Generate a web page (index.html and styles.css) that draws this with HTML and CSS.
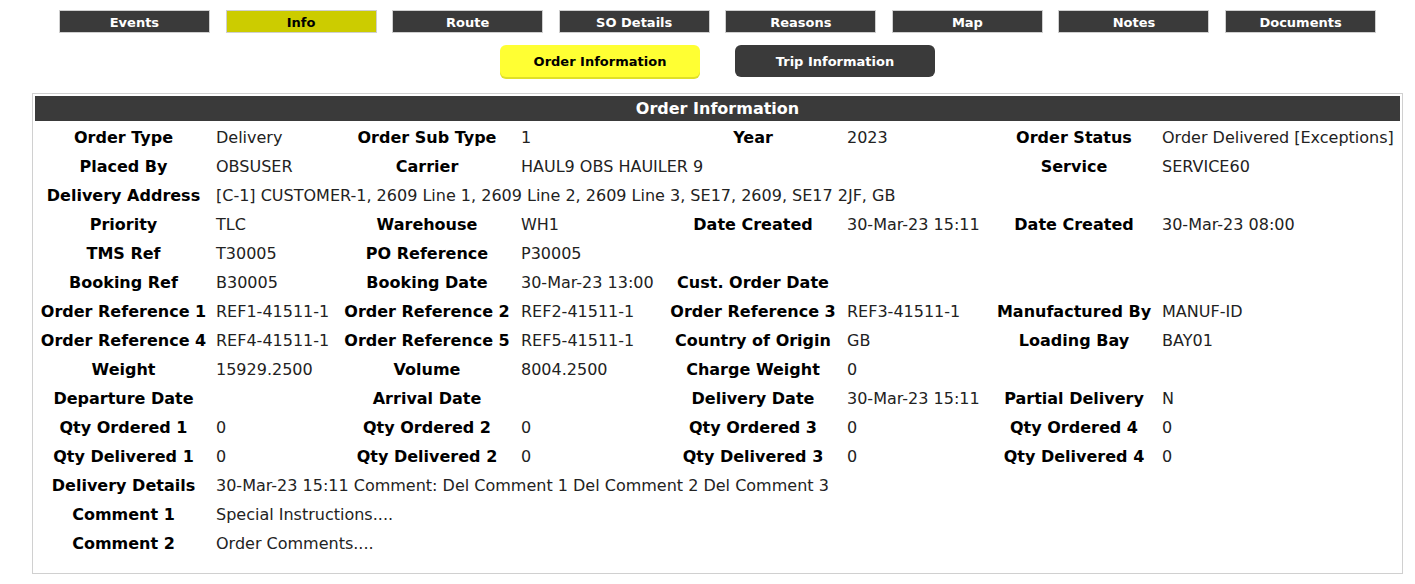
FILE: index.html
```html
<!DOCTYPE html>
<html>
<head>
    <meta charset="utf-8">
    <link rel="stylesheet" href="styles.css">
</head>
<body>
    <div class="page">
        <div class="tabs">
            <div class="tab">Events</div>
            <div class="tab active">Info</div>
            <div class="tab">Route</div>
            <div class="tab">SO Details</div>
            <div class="tab">Reasons</div>
            <div class="tab">Map</div>
            <div class="tab">Notes</div>
            <div class="tab">Documents</div>
        </div>

        <div class="sub-tabs">
            <div class="sub-tab selected">Order Information</div>
            <div class="sub-tab">Trip Information</div>
        </div>

        <div class="panel">
            <div class="panel-header">Order Information</div>
            <div class="info-grid">
                <div class="lbl">Order Type</div><div class="val">Delivery</div>
                <div class="lbl">Order Sub Type</div><div class="val">1</div>
                <div class="lbl">Year</div><div class="val">2023</div>
                <div class="lbl">Order Status</div><div class="val">Order Delivered [Exceptions]</div>

                <div class="lbl">Placed By</div><div class="val">OBSUSER</div>
                <div class="lbl">Carrier</div><div class="val span3">HAUL9 OBS HAUILER 9</div>
                <div class="lbl">Service</div><div class="val">SERVICE60</div>

                <div class="lbl">Delivery Address</div><div class="val span7">[C-1] CUSTOMER-1, 2609 Line 1, 2609 Line 2, 2609 Line 3, SE17, 2609, SE17 2JF, GB</div>

                <div class="lbl">Priority</div><div class="val">TLC</div>
                <div class="lbl">Warehouse</div><div class="val">WH1</div>
                <div class="lbl">Date Created</div><div class="val">30-Mar-23 15:11</div>
                <div class="lbl">Date Created</div><div class="val">30-Mar-23 08:00</div>

                <div class="lbl">TMS Ref</div><div class="val">T30005</div>
                <div class="lbl">PO Reference</div><div class="val">P30005</div>
                <div class="lbl"></div><div class="val"></div>
                <div class="lbl"></div><div class="val"></div>

                <div class="lbl">Booking Ref</div><div class="val">B30005</div>
                <div class="lbl">Booking Date</div><div class="val">30-Mar-23 13:00</div>
                <div class="lbl">Cust. Order Date</div><div class="val"></div>
                <div class="lbl"></div><div class="val"></div>

                <div class="lbl">Order Reference 1</div><div class="val">REF1-41511-1</div>
                <div class="lbl">Order Reference 2</div><div class="val">REF2-41511-1</div>
                <div class="lbl">Order Reference 3</div><div class="val">REF3-41511-1</div>
                <div class="lbl">Manufactured By</div><div class="val">MANUF-ID</div>

                <div class="lbl">Order Reference 4</div><div class="val">REF4-41511-1</div>
                <div class="lbl">Order Reference 5</div><div class="val">REF5-41511-1</div>
                <div class="lbl">Country of Origin</div><div class="val">GB</div>
                <div class="lbl">Loading Bay</div><div class="val">BAY01</div>

                <div class="lbl">Weight</div><div class="val">15929.2500</div>
                <div class="lbl">Volume</div><div class="val">8004.2500</div>
                <div class="lbl">Charge Weight</div><div class="val">0</div>
                <div class="lbl"></div><div class="val"></div>

                <div class="lbl">Departure Date</div><div class="val"></div>
                <div class="lbl">Arrival Date</div><div class="val"></div>
                <div class="lbl">Delivery Date</div><div class="val">30-Mar-23 15:11</div>
                <div class="lbl">Partial Delivery</div><div class="val">N</div>

                <div class="lbl">Qty Ordered 1</div><div class="val">0</div>
                <div class="lbl">Qty Ordered 2</div><div class="val">0</div>
                <div class="lbl">Qty Ordered 3</div><div class="val">0</div>
                <div class="lbl">Qty Ordered 4</div><div class="val">0</div>

                <div class="lbl">Qty Delivered 1</div><div class="val">0</div>
                <div class="lbl">Qty Delivered 2</div><div class="val">0</div>
                <div class="lbl">Qty Delivered 3</div><div class="val">0</div>
                <div class="lbl">Qty Delivered 4</div><div class="val">0</div>

                <div class="lbl">Delivery Details</div><div class="val span7">30-Mar-23 15:11 Comment: Del Comment 1 Del Comment 2 Del Comment 3</div>

                <div class="lbl">Comment 1</div><div class="val span7">Special Instructions....</div>

                <div class="lbl">Comment 2</div><div class="val span7">Order Comments....</div>
            </div>
        </div>
    </div>
</body>
</html>
```

FILE: styles.css
```css
* {
    box-sizing: border-box;
}

body {
    margin: 0;
    font-family: "DejaVu Sans", Verdana, sans-serif;
    color: #000;
    background: #fff;
}

.page {
    padding: 10px 12px 0 32px;
}

/* top tab strip */
.tabs {
    display: flex;
    justify-content: center;
    gap: 15.6px;
}

.tab {
    width: 151px;
    height: 23px;
    background: #3a3a3a;
    border: 1px solid #cfcfcf;
    color: #fff;
    font-size: 13px;
    font-weight: bold;
    text-align: center;
    line-height: 23px;
}

.tab.active {
    background: #cccc00;
    color: #000;
}

/* order / trip switch */
.sub-tabs {
    display: flex;
    justify-content: center;
    gap: 35px;
    margin-top: 12px;
}

.sub-tab {
    width: 200px;
    height: 32px;
    border-radius: 6px;
    background: #3a3a3a;
    color: #fff;
    font-size: 13px;
    font-weight: bold;
    text-align: center;
    line-height: 34px;
}

.sub-tab.selected {
    background: #ffff33;
    color: #000;
    box-shadow: 0 2px 0 #e0e028;
}

/* info panel */
.panel {
    margin-top: 16px;
    border: 1px solid #d0d0d0;
    padding: 2px 2px 15px 2px;
}

.panel-header {
    height: 25px;
    background: #3a3a3a;
    color: #fff;
    font-size: 16px;
    font-weight: bold;
    text-align: center;
    line-height: 25px;
}

.info-grid {
    display: grid;
    grid-template-columns: 177px 125px 180px 146px 180px 147px 168px 1fr;
    grid-auto-rows: 29px;
    padding-top: 2px;
    font-size: 16px;
}

.lbl {
    font-weight: bold;
    text-align: center;
    line-height: 30px;
    white-space: nowrap;
}

.val {
    padding-left: 4px;
    line-height: 30px;
    color: #222;
    white-space: nowrap;
}

.span3 {
    grid-column: span 3;
}

.span7 {
    grid-column: span 7;
}
```
